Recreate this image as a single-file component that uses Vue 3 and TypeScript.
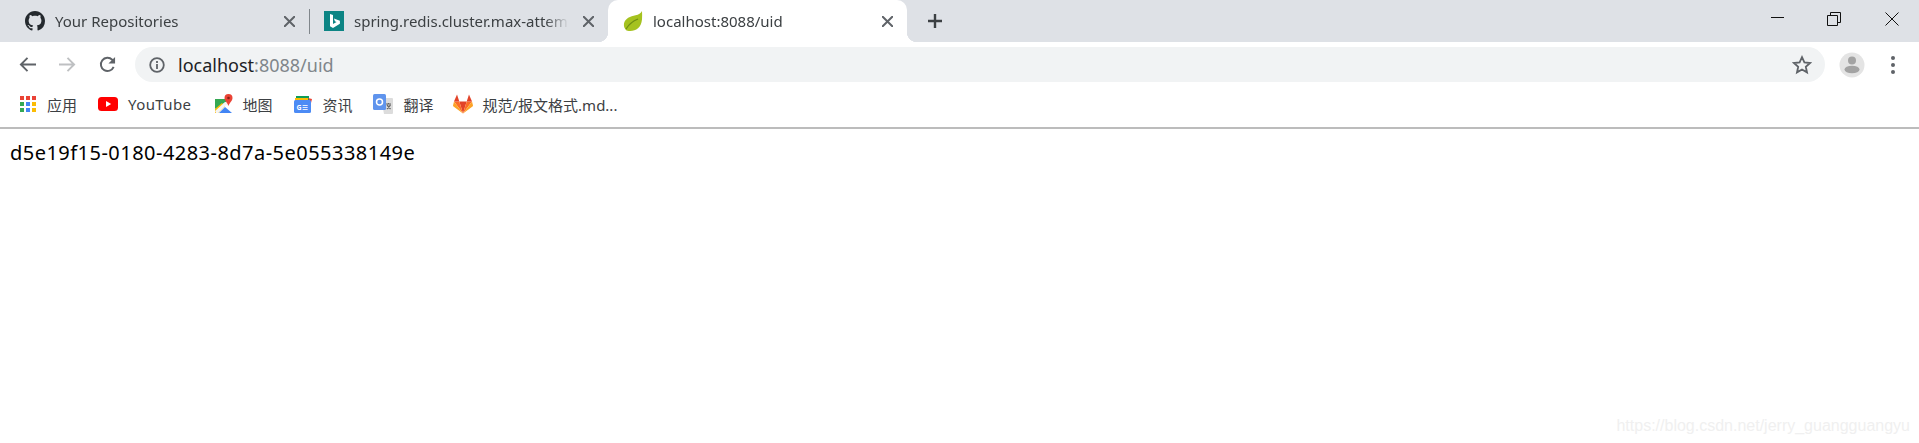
<template>
  <div class="browser">
    <div class="tabstrip">
      <div
        v-for="tab in tabs"
        :key="tab.title"
        class="tab"
        :class="{ active: tab.active, divided: tab.divided }"
      >
        <svg v-if="tab.icon === 'github'" class="tab-icon" viewBox="0 0 16 16">
          <path
            fill="#24292e"
            d="M8 0C3.58 0 0 3.58 0 8c0 3.54 2.29 6.53 5.47 7.59.4.07.55-.17.55-.38 0-.19-.01-.82-.01-1.49-2.01.37-2.53-.49-2.69-.94-.09-.23-.48-.94-.82-1.13-.28-.15-.68-.52-.01-.53.63-.01 1.08.58 1.23.82.72 1.21 1.87.87 2.33.66.07-.52.28-.87.51-1.07-1.78-.2-3.64-.89-3.64-3.95 0-.87.31-1.59.82-2.15-.08-.2-.36-1.02.08-2.12 0 0 .67-.21 2.2.82.64-.18 1.32-.27 2-.27s1.36.09 2 .27c1.53-1.04 2.2-.82 2.2-.82.44 1.1.16 1.92.08 2.12.51.56.82 1.27.82 2.15 0 3.07-1.87 3.75-3.65 3.95.29.25.54.73.54 1.48 0 1.07-.01 1.93-.01 2.2 0 .21.15.46.55.38A8.01 8.01 0 0 0 16 8c0-4.42-3.58-8-8-8z"
          />
        </svg>
        <svg v-else-if="tab.icon === 'bing'" class="tab-icon" viewBox="0 0 20 20">
          <rect width="20" height="20" fill="#0c8484" />
          <path
            fill="#fff"
            d="M6 3l3 1v9l3.6-2-1.7-.8-1-2.6 6 2.1v3.1L9 17l-3-1.7z"
          />
        </svg>
        <svg v-else class="tab-icon" viewBox="0 0 20 20">
          <path
            fill="#a5c21f"
            d="M19 0c-1 2.4-3.400 3.600-6.400 4.200C7.400 5.200 2 7.200 1 12.600c-.4 2.400.3 4.600 1.700 6.100 1 1 2.600 1.300 4.500 1.300 6 0 11-3.500 11.800-11.500.2-2.800.2-5.500 0-8.500z"
          />
          <path fill="none" stroke="#6f8f12" stroke-width="1.200" d="M3 18c3-5 7-8 12-10" />
        </svg>
        <span class="tab-title">{{ tab.title }}</span>
        <svg class="tab-close" viewBox="0 0 10 10">
          <path d="M0 0l10 10M10 0L0 10" />
        </svg>
      </div>
      <svg class="new-tab" viewBox="0 0 14 14">
        <path d="M7 0v14M0 7h14" />
      </svg>
      <div class="window-controls">
        <svg class="minimize" viewBox="0 0 14 14"><path d="M0 5.500h13" /></svg>
        <svg viewBox="0 0 14 14">
          <path d="M.5 3.500h10v10H.500zM3.500 3.500V.5h10v10h-3" />
        </svg>
        <svg viewBox="0 0 14 14"><path d="M.5.5l13 13M13.500.5l-13 13" /></svg>
      </div>
    </div>

    <div class="toolbar">
      <svg class="nav-icon" viewBox="0 0 18 16">
        <path class="nav-line" d="M18 8H2M9 1L2 8l7 7" />
      </svg>
      <svg class="nav-icon disabled" viewBox="0 0 18 16">
        <path class="nav-line" d="M0 8h16M9 1l7 7-7 7" />
      </svg>
      <svg class="nav-icon" viewBox="0 0 18 18">
        <path class="nav-line" d="M15.500 11.500A7 7 0 1 1 14 4l2 2" />
        <path fill="#5f6368" d="M17 1v7h-7z" />
      </svg>
      <div class="omnibox">
        <svg class="info-icon" viewBox="0 0 16 16">
          <circle cx="8" cy="8" r="6.800" />
          <path d="M8 7v5M8 4v2" />
        </svg>
        <span class="url">localhost<span class="url-rest">:8088/uid</span></span>
        <svg class="star" viewBox="0 0 20 20">
          <path
            d="M10 2.200l2.400 5.200 5.600.6-4.200 3.800 1.200 5.600-5-2.900-5 2.900 1.200-5.600L2 8l5.600-.6z"
          />
        </svg>
      </div>
      <svg class="avatar" viewBox="0 0 26 26">
        <circle cx="13" cy="13" r="12.500" fill="#e4e4e4" />
        <circle cx="13" cy="8.500" r="4" fill="#a3a3a3" />
        <ellipse cx="13" cy="17.500" rx="7.500" ry="3.800" fill="#a3a3a3" />
      </svg>
      <div class="menu-dots"><i></i><i></i><i></i></div>
    </div>

    <div class="bookmarks">
      <div class="bookmark apps">
        <div class="apps-grid">
          <i v-for="color in appColors" :key="color" :style="{ background: color }"></i>
        </div>
        <span>应用</span>
      </div>
      <div class="bookmark youtube">
        <svg class="bm-icon" viewBox="0 0 20 14">
          <rect width="20" height="14" rx="3.500" fill="#f00" />
          <path fill="#fff" d="M8 4l5.200 3L8 10z" />
        </svg>
        <span>YouTube</span>
      </div>
      <div class="bookmark maps">
        <svg class="bm-icon" viewBox="0 0 18 20">
          <path fill="#34a853" d="M0 5h11v3L0 15z" />
          <path fill="#fbbc04" d="M0 15l7-6 3 3-7 7H0z" />
          <path fill="#f4f4f4" d="M0 17L10 8l3 0 1 4-3-1-8 8H1z" />
          <path fill="#4285f4" d="M4 19l6-6 7 6z" />
          <path fill="#ea4335" d="M13.500 0a4 4 0 0 1 4 4c0 3-3 4.500-4 8-1-3.500-4-5-4-8a4 4 0 0 1 4-4z" />
          <circle cx="13.500" cy="4" r="1.300" fill="#8a1f14" />
        </svg>
        <span>地图</span>
      </div>
      <div class="bookmark news">
        <svg class="bm-icon" viewBox="0 0 20 20">
          <path fill="#0f9d58" d="M3 2h13v4H3z" />
          <path fill="#fbbc04" d="M2 4h13v3H2z" />
          <path fill="#ea4335" d="M15 4l4 1-1 4z" />
          <rect x="1" y="6" width="17" height="13" rx="1.500" fill="#4c8bf5" />
          <text x="9.500" y="15.500" class="news-text">G≡</text>
        </svg>
        <span>资讯</span>
      </div>
      <div class="bookmark">
        <svg class="bm-icon" viewBox="0 0 20 20">
          <path fill="#dcdcdc" d="M8 4h11a1 1 0 0 1 1 1v14a1 1 0 0 1-1 1h-8z" />
          <rect width="13" height="16" rx="1.500" fill="#5f94ed" />
          <circle cx="6.500" cy="8" r="3" fill="none" stroke="#fff" stroke-width="1.500" />
          <path stroke="#666" stroke-width="1.200" d="M13 10h5M15.500 9v1.500M14 15l3.500-4M14 11l3.500 4" />
        </svg>
        <span>翻译</span>
      </div>
      <div class="bookmark gitlab">
        <svg class="bm-icon" viewBox="0 0 20 19">
          <path fill="#e24329" d="M10 19L6.300 7h7.400z" />
          <path fill="#fc6d26" d="M10 19L6.300 7H1z" />
          <path fill="#fca326" d="M1 7L0 11c0 .5.200.8.500 1L10 19z" />
          <path fill="#e24329" d="M1 7h5.300L4 0z" />
          <path fill="#fc6d26" d="M10 19l3.700-12H19z" />
          <path fill="#fca326" d="M19 7l1 4c0 .5-.2.800-.5 1L10 19z" />
          <path fill="#e24329" d="M19 7h-5.300L16 0z" />
        </svg>
        <span>规范/报文格式.md...</span>
      </div>
    </div>

    <main class="page">
      <p class="uid">d5e19f15-0180-4283-8d7a-5e055338149e</p>
      <p class="watermark">https://blog.csdn.net/jerry_guangguangyu</p>
    </main>
  </div>
</template>

<script setup lang="ts">
interface Tab {
  title: string
  icon: string
  active?: boolean
  divided?: boolean
}

const tabs: Tab[] = [
  { title: 'Your Repositories', icon: 'github', divided: true },
  { title: 'spring.redis.cluster.max-attempts', icon: 'bing' },
  { title: 'localhost:8088/uid', icon: 'spring', active: true },
]

const appColors = [
  '#ea4335',
  '#ea4336',
  '#ea4337',
  '#34a853',
  '#4285f4',
  '#fbbc04',
  '#34a854',
  '#4285f5',
  '#fbbc05',
]
</script>

<style>
html,
body {
  background: #fff;
}
</style>

<style scoped>
.browser {
  height: 443px;
  display: flex;
  flex-direction: column;
  overflow: hidden;
  font-family: 'Noto Sans', 'Noto Sans CJK SC', sans-serif;
}

.tabstrip {
  height: 42px;
  flex: none;
  display: flex;
  background: #dee1e6;
  padding-left: 9px;
}

.tab {
  position: relative;
  width: 300px;
  flex: none;
  display: flex;
  align-items: center;
  padding: 0 14px 0 15px;
  box-sizing: border-box;
  font-size: 15px;
  color: #3c4043;
}

.tab:first-child {
  padding-left: 16px;
}

.tab + .tab {
  width: 299px;
}

.tab.divided::after {
  content: '';
  position: absolute;
  right: -1px;
  top: 9px;
  width: 1px;
  height: 25px;
  background: #80868b;
}

.tab.active {
  background: #fff;
  border-radius: 10px 10px 0 0;
}

.tab.active::before,
.tab.active::after {
  content: '';
  position: absolute;
  bottom: 0;
  width: 10px;
  height: 10px;
}

.tab.active::before {
  left: -10px;
  background: radial-gradient(circle at 0 0, transparent 10px, #fff 10.500px);
}

.tab.active::after {
  right: -10px;
  background: radial-gradient(circle at 100% 0, transparent 10px, #fff 10.500px);
}

.tab-icon {
  width: 20px;
  height: 20px;
  flex: none;
  margin-right: 10px;
}

.tab-title {
  flex: 1;
  min-width: 0;
  white-space: nowrap;
  overflow: hidden;
  mask-image: linear-gradient(to right, #000 calc(100% - 28px), transparent calc(100% - 4px));
}

.tab-close {
  width: 11px;
  height: 11px;
  flex: none;
  margin-left: 10px;
  fill: none;
  stroke: #5f6368;
  stroke-width: 1.800;
}

.new-tab {
  width: 14px;
  height: 14px;
  margin: 14px 0 0 21px;
  fill: none;
  stroke: #3c4043;
  stroke-width: 2.400;
}

.window-controls {
  margin-left: auto;
  padding: 12px 20px 0 0;
  display: flex;
  gap: 44px;
}

.window-controls svg {
  width: 14px;
  height: 14px;
  fill: none;
  stroke: #111;
  stroke-width: 1;
}

.window-controls .minimize {
  margin-right: -2px;
}

.toolbar {
  height: 43px;
  flex: none;
  display: flex;
  align-items: center;
  padding: 2px 0 0 19px;
  box-sizing: border-box;
}

.nav-icon {
  width: 17px;
  height: 17px;
  flex: none;
  margin-right: 23px;
}

.nav-icon.disabled {
  opacity: 0.4;
}

.nav-line {
  fill: none;
  stroke: #5f6368;
  stroke-width: 2;
}

.omnibox {
  width: 1690px;
  height: 35px;
  margin-left: -4px;
  flex: none;
  display: flex;
  align-items: center;
  padding: 0 13px 0 14px;
  box-sizing: border-box;
  border-radius: 18px;
  background: #f1f3f4;
}

.info-icon {
  width: 16px;
  height: 16px;
  fill: none;
  stroke: #5f6368;
  stroke-width: 1.800;
  margin-right: 13px;
}

.url {
  font-size: 18px;
  color: #202124;
}

.url-rest {
  color: #80868b;
}

.star {
  width: 20px;
  height: 20px;
  margin-left: auto;
  fill: none;
  stroke: #5f6368;
  stroke-width: 1.800;
}

.avatar {
  width: 26px;
  height: 26px;
  flex: none;
  margin-left: 14px;
}

.menu-dots {
  margin-left: 26px;
  display: flex;
  flex-direction: column;
  gap: 3px;
}

.menu-dots i {
  width: 4px;
  height: 4px;
  border-radius: 50%;
  background: #5f6368;
}

.bookmarks {
  height: 38px;
  flex: none;
  display: flex;
  align-items: center;
  padding: 0 0 4px 20px;
  gap: 21px;
  border-bottom: 2px solid #bcbcbc;
  font-size: 15px;
  color: #3c4043;
}

.bookmark {
  display: flex;
  align-items: center;
  gap: 10px;
}

.bookmark.apps {
  gap: 11px;
}

.bookmark.youtube span {
  letter-spacing: 0.4px;
}

.bookmark.maps {
  margin-left: 3px;
  gap: 9px;
}

.bookmark.maps .bm-icon {
  width: 18px;
}

.bookmark.news {
  gap: 9px;
}

.bookmark.gitlab {
  margin-left: -2px;
}

.apps-grid {
  width: 16px;
  display: grid;
  grid-template-columns: repeat(3, 4px);
  gap: 2px;
}

.apps-grid i {
  height: 4px;
}

.bm-icon {
  width: 20px;
  height: 20px;
  flex: none;
}

.news-text {
  font-size: 7px;
  font-weight: 700;
  fill: #fff;
  text-anchor: middle;
}

.page {
  flex: 1;
  display: flex;
  flex-direction: column;
  justify-content: space-between;
  padding: 10px 9px 8px 10px;
}

.uid {
  margin: 0;
  font-size: 20px;
  line-height: 28px;
  letter-spacing: 0.47px;
  color: #000;
}

.watermark {
  margin: 0;
  align-self: flex-end;
  font-family: 'Liberation Sans', sans-serif;
  font-size: 16px;
  color: #f0f0f0;
}
</style>
